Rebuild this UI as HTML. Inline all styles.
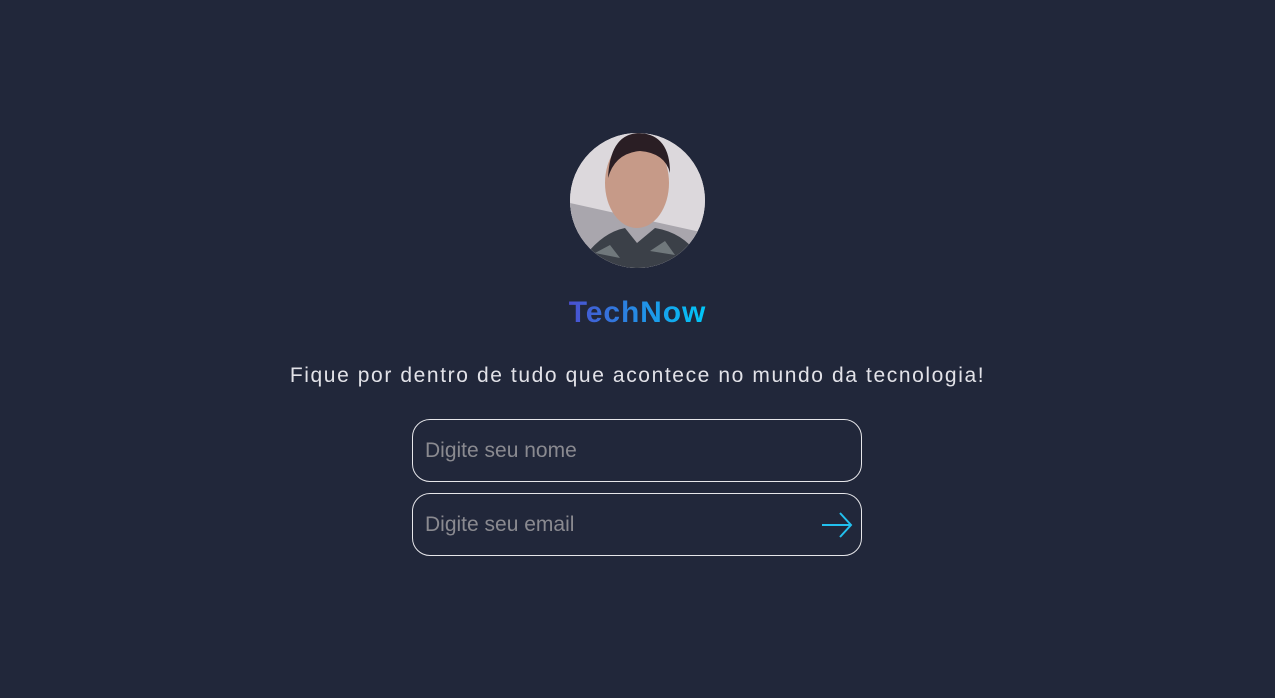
<!DOCTYPE html>
<html><head><meta charset="utf-8"><style>
body{margin:0;background:#21273a;width:1275px;height:698px;overflow:hidden;font-family:"Liberation Sans",sans-serif;position:relative}
.av{position:absolute;left:570px;top:133px;width:135px;height:135px;border-radius:50%;overflow:hidden;background:#d8d4d8}
.t{position:absolute;left:0;width:1275px;text-align:center}
h1{position:absolute;left:0;width:1275px;top:294px;margin:0;text-align:center;font-size:30px;letter-spacing:0.9px;font-weight:bold;line-height:38px}
h1 span{background:linear-gradient(90deg,#4a4fd0,#00c8f8);-webkit-background-clip:text;background-clip:text;color:transparent}
.sub{top:364px;font-size:21px;letter-spacing:1.6px;color:#e2e2e8;line-height:24px}
.in{position:absolute;left:412px;width:450px;height:63px;border:1px solid #e6e6ea;border-radius:18px;box-sizing:border-box}
.in span{position:absolute;left:12px;top:19px;font-size:21px;color:#8a8a90}
</style></head><body>
<div class="av"><svg width="135" height="135" viewBox="0 0 135 135">
<rect width="135" height="135" fill="#dcd8dc"/>
<polygon points="0,70 135,100 135,135 0,135" fill="#a9a6ad"/>
<ellipse cx="67" cy="50" rx="32" ry="45" fill="#c69a88"/>
<path d="M38 45 Q40 0 70 0 Q100 2 100 40 Q95 20 70 18 Q45 20 38 45Z" fill="#2a1e24"/>
<path d="M10 130 Q30 100 55 95 L67 110 L85 95 Q115 100 130 125 L135 135 L0 135Z" fill="#3b4048"/>
<path d="M25 120 L40 112 L50 125 Z M80 118 L95 108 L105 122Z" fill="#70787c"/>
</svg></div>
<h1><span>TechNow</span></h1>
<div class="t sub">Fique por dentro de tudo que acontece no mundo da tecnologia!</div>
<div class="in" style="top:419px"><span>Digite seu nome</span></div>
<div class="in" style="top:493px"><span>Digite seu email</span>
<svg style="position:absolute;left:408px;top:16px" width="32" height="30" viewBox="0 0 32 30"><path d="M1 15H30M19 3L30 15L19 27" fill="none" stroke="#22c0ee" stroke-width="2"/></svg></div>
</body></html>
